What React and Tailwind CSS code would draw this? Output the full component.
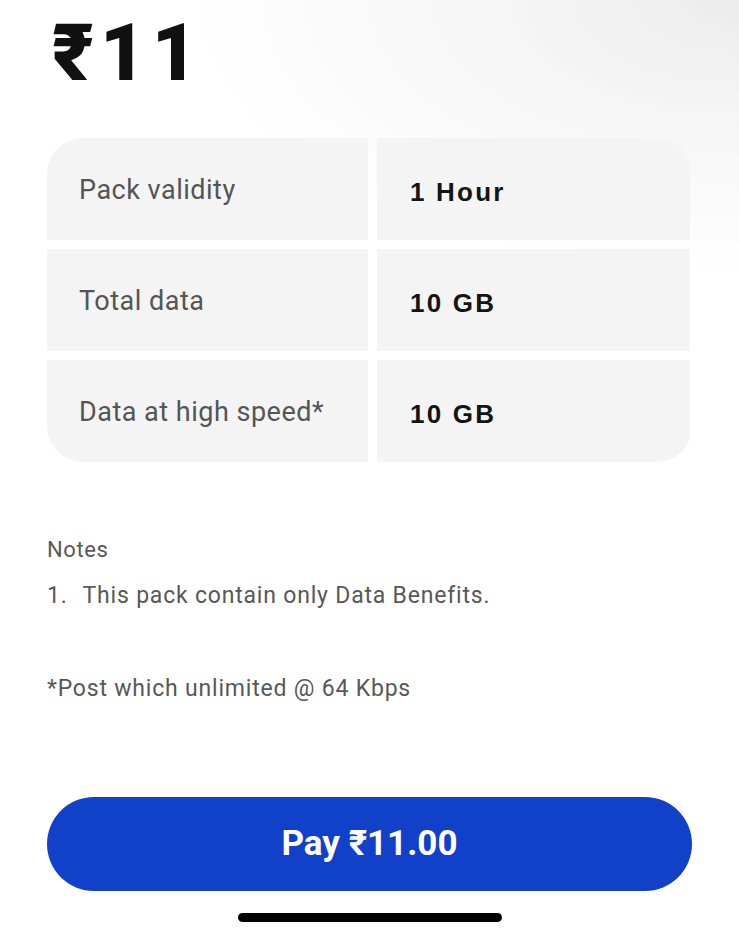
import React from 'react'

const rows = [
  { label: 'Pack validity', value: '1 Hour' },
  { label: 'Total data', value: '10 GB' },
  { label: 'Data at high speed*', value: '10 GB' },
]

export default function App() {
  return (
    <div className="min-h-[929px] w-full bg-white bg-[radial-gradient(ellipse_75%_30%_at_top_right,#ececec_0%,#f6f6f6_45%,#ffffff_100%)] font-['Roboto','Noto_Sans',sans-serif]">
      <div className="px-[47px]">
        <h1 className="pt-[14px] pl-[5px] text-[79px] leading-none font-black text-[#111] tracking-[6px]">
          ₹11
        </h1>

        <div className="mt-[45px] grid grid-cols-[321px_313px] gap-[9px] overflow-hidden rounded-[36px]">
          {rows.map((row) => (
            <React.Fragment key={row.label}>
              <div className="flex h-[102px] items-center bg-[#f4f4f4] pl-[32px] pt-[3px] text-[27px] tracking-[0.5px] text-[#555]">
                {row.label}
              </div>
              <div className="flex h-[102px] items-center bg-[#f4f4f4] pl-[33px] pt-[7px] text-[26px] font-bold tracking-[2.2px] text-[#141414] font-['Liberation_Sans','Noto_Sans',sans-serif]">
                {row.value}
              </div>
            </React.Fragment>
          ))}
        </div>

        <div className="mt-[74px] text-[#585858]">
          <p className="text-[22px] leading-[28px] tracking-[0.6px]">Notes</p>
          <div className="mt-[17px] flex gap-[15px] text-[23px] leading-[30px] tracking-[0.8px]">
            <span>1.</span>
            <span>This pack contain only Data Benefits.</span>
          </div>
          <p className="mt-[63px] text-[23px] leading-[30px] tracking-[0.8px]">*Post which unlimited @ 64 Kbps</p>
        </div>

        <button className="mt-[93px] flex h-[94px] w-full items-center justify-center rounded-full bg-[#1140c9] text-[35px] font-bold text-white">
          Pay ₹11.00
        </button>

        <div className="mt-[22px] flex justify-center">
          <div className="h-[9px] w-[264px] rounded-full bg-black" />
        </div>
      </div>
    </div>
  )
}
